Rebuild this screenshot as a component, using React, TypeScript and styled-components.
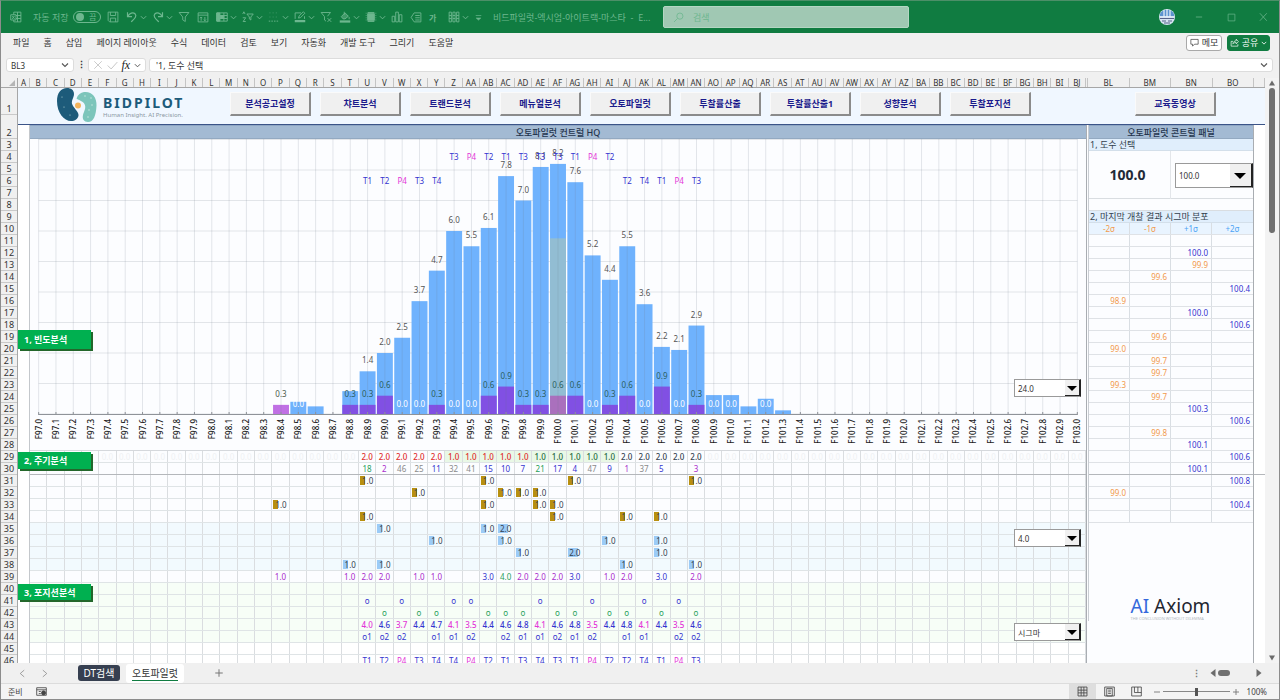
import React from "react";
import styled, { createGlobalStyle, css } from "styled-components";

const FONT = `"Noto Sans", "Noto Sans CJK KR", sans-serif`;

const Global = createGlobalStyle`
  *, *::before, *::after { box-sizing: border-box; }
  body { margin: 0; background: #f0f0f0; font-family: ${FONT}; color: #333; overflow: hidden; }
  button, input, select { font-family: inherit; margin: 0; }
  button { cursor: pointer; }
`;

const COLS = 61;
const BLUE = "#3434cf";
const PINK = "#e336d8";
const PURPLE = "#a92ccc";
const GREEN = "#27a05a";
const GRAY = "#8a8a8a";
const RED = "#e02b2b";
const DARK = "#33414f";

/* ---------- data ---------- */

type Cell = { text: string; color?: string; bg?: string; fill?: number; bold?: boolean };
type RowCells = Record<number, Cell>;

const blueBars: Record<number, number> = {
  15: 0.4, 16: 0.25, 18: 0.75, 19: 1.4, 20: 2.0, 21: 2.5, 22: 3.7, 23: 4.7, 24: 6.0, 25: 5.5,
  26: 6.1, 27: 7.8, 28: 7.0, 29: 8.1, 30: 8.2, 31: 7.6, 32: 5.2, 33: 4.4, 34: 5.5, 35: 3.6,
  36: 2.2, 37: 2.1, 38: 2.9, 39: 0.62, 40: 0.62, 41: 0.25, 42: 0.5, 43: 0.12,
};
const purpleBars: Record<number, number> = {
  14: 0.3, 18: 0.3, 19: 0.3, 20: 0.6, 23: 0.3, 26: 0.6, 27: 0.9, 28: 0.3, 29: 0.3, 30: 0.6,
  31: 0.6, 33: 0.3, 34: 0.6, 36: 0.9, 38: 0.3,
};
const zeroLabels = [15, 21, 22, 24, 25, 32, 35, 37, 39, 40, 42];
const upperMarks: Record<number, string> = {
  24: "T3", 25: "P4", 26: "T2", 27: "T1", 28: "T3", 29: "T3", 30: "T3", 31: "T1", 32: "P4", 33: "T2",
};
const lowerMarks: Record<number, string> = {
  19: "T1", 20: "T2", 21: "P4", 22: "T3", 23: "T4", 34: "T2", 35: "T4", 36: "T1", 37: "P4", 38: "T3",
};

const run = (start: number, texts: string, color: (t: string) => string, bold = false): RowCells =>
  Object.fromEntries(
    texts.split(" ").flatMap((t, i) => (t === "-" ? [] : [[start + i, { text: t, color: color(t), bold }]]))
  );
const marks = (cols: number[], text: string, color: string, bg?: string, fill?: number): RowCells =>
  Object.fromEntries(cols.map((c) => [c, { text, color, bg, fill }]));

const weights: RowCells = Object.fromEntries(
  Array.from({ length: COLS }, (_, i): [number, Cell] => {
    if (i < 4) return [i, { text: "" }];
    if (i < 19 || i > 38) return [i, { text: "0.0", color: "#eff1f3" }];
    if (i < 24) return [i, { text: "2.0", color: RED, bold: true }];
    if (i < 29) return [i, { text: "1.0", color: RED, bg: "#e9f8e6", bold: true }];
    if (i < 34) return [i, { text: "1.0", color: "#1f6b3f", bg: "#e9f8e6", bold: true }];
    return [i, { text: "2.0", color: DARK, bold: true }];
  })
);
const cycleColor = (t: string) => {
  const n = Number(t);
  if (n <= 3) return PURPLE;
  if (n <= 17) return BLUE;
  return n <= 21 ? GREEN : GRAY;
};
const countColor = (t: string) => (t === "3.0" ? BLUE : t === "4.0" ? GREEN : PURPLE);
const posColor = (t: string) => (Number(t) < 4.2 ? PINK : BLUE);
const markColor = (t: string) => (t === "P4" ? PINK : BLUE);
const GOLD = "#b8900f";
const SKY = "#9bcbf7";

const dataRows: { id: number; tone?: "sky" | "mint" | "white"; strong?: boolean; cells: RowCells }[] = [
  { id: 29, cells: weights },
  { id: 30, strong: true, cells: run(19, "18 2 46 25 11 32 41 15 10 7 21 17 4 47 9 1 37 5 - 3", cycleColor) },
  { id: 31, cells: marks([19, 26, 31, 38], "1.0", DARK, GOLD, 1) },
  { id: 32, cells: marks([22, 27, 28, 29], "1.0", DARK, GOLD, 1) },
  { id: 33, cells: marks([14, 26, 29, 30], "1.0", DARK, GOLD, 1) },
  { id: 34, cells: marks([19, 30, 34, 36], "1.0", DARK, GOLD, 1) },
  { id: 35, tone: "sky", cells: { ...marks([20, 26], "1.0", DARK, SKY, 1), ...marks([27], "2.0", DARK, SKY, 2) } },
  { id: 36, tone: "sky", cells: marks([23, 27, 33, 36], "1.0", DARK, SKY, 1) },
  { id: 37, tone: "sky", cells: { ...marks([28, 36], "1.0", DARK, SKY, 1), ...marks([31], "2.0", DARK, SKY, 2) } },
  { id: 38, tone: "sky", cells: marks([18, 20, 34, 38], "1.0", DARK, SKY, 1) },
  { id: 39, cells: run(14, "1.0 - - - 1.0 2.0 2.0 - 1.0 1.0 - - 3.0 4.0 2.0 2.0 2.0 3.0 - 1.0 2.0 - 3.0 - 2.0", countColor) },
  { id: 40, tone: "mint", cells: {} },
  { id: 41, tone: "mint", cells: marks([19, 21, 24, 25, 29, 32, 35, 37], "o", BLUE) },
  { id: 42, tone: "mint", cells: marks([20, 22, 23, 26, 27, 28, 30, 31, 33, 34, 36, 38], "o", GREEN) },
  {
    id: 43, tone: "mint",
    cells: run(19, "4.0 4.6 3.7 4.4 4.7 4.1 3.5 4.4 4.6 4.8 4.1 4.6 4.8 3.5 4.4 4.8 4.1 4.4 3.5 4.6", posColor, true),
  },
  { id: 44, tone: "mint", cells: run(19, "o1 o2 o2 - o1 o1 o2 - o2 o1 o1 o2 o1 o2 - o1 o1 - o2 o2", () => BLUE) },
  { id: 45, tone: "white", cells: {} },
  { id: 46, tone: "white", cells: run(19, "T1 T2 P4 T3 T4 T4 P4 T2 T1 T3 T4 T3 T1 P4 T2 T2 T4 T1 P4 T3", markColor) },
];

const sigma: [number, string][] = [
  [-1, ""], [2, "100.0"], [2, "99.9"], [1, "99.6"], [3, "100.4"], [0, "98.9"], [2, "100.0"], [3, "100.6"],
  [1, "99.6"], [0, "99.0"], [1, "99.7"], [1, "99.7"], [0, "99.3"], [1, "99.7"], [2, "100.3"], [3, "100.6"],
  [1, "99.8"], [2, "100.1"], [3, "100.6"], [2, "100.1"], [3, "100.8"], [0, "99.0"], [3, "100.4"], [-1, ""],
];

const letters = "ABCDEFGHIJKLMNOPQRSTUVWXYZ";
const columnName = (n: number): string =>
  n < 26 ? letters[n] : letters[Math.floor(n / 26) - 1] + letters[n % 26];

/* ---------- icons ---------- */

const Svg = styled.svg<{ $s: number }>`
  width: ${(p) => p.$s}px;
  height: ${(p) => p.$s}px;
  flex: none;
  fill: none;
  stroke: currentColor;
  stroke-width: 1.2;
  display: block;
`;
const Icon = ({ size = 13, children }: { size?: number; children: React.ReactNode }) => (
  <Svg $s={size} viewBox="0 0 16 16" aria-hidden="true">{children}</Svg>
);
const Chevron = ({ size = 7 }: { size?: number }) => (
  <Icon size={size}><path d="M2 5l6 6 6-6" strokeWidth="2.2" /></Icon>
);

const glyphs: Record<string, React.ReactNode> = {
  save: <path d="M1.5 1.5h13v13h-11l-2-2zM4.500 1.500v4.500h7v-4.500M4.500 14.500v-5h7v5" />,
  undo: <path d="M2 1.500v6h6M2.300 7.200C5 3 9 1 12 3.700c3 3-.2 6-5 10.800" strokeWidth="1.600" />,
  redo: <path d="M14 1.500v6H8M13.700 7.200C11 3 7 1 4 3.700c-3 3 .2 6 5 10.800" strokeWidth="1.600" />,
  filter: <path d="M1.500 2h13L9.700 8v6l-3.400-2.200V8z" />,
  sort: <><path d="M1.500 2.500h13v12h-13zM1.500 5.500h13" /><path d="M5.500 13V8M4 9.500L5.500 8 7 9.500M10.500 8v5M9 11.500l1.500 1.500 1.500-1.500" /></>,
  grid: <><path d="M1 2.500h14v11H1zM1 6h14M1 10h14M5 2.500v11M10.500 2.500v11" /><path d="M5.500 6h5v4h-5zM1 2.500h4v11H1z" fill="currentColor" /></>,
  az: <><path d="M6.500 4h8.500l-3.200 4v4l-2-1.500V8z" /><path d="M1 9h4l-3.500 5H5M1 4l1.500-3L4 4" /></>,
  border: <><path d="M2 2.500h12M2 8h12" strokeDasharray="1.200 3" opacity=".6" /><path d="M1 13.500h14" strokeDasharray="2 1.500" /></>,
  pen: <><path d="M1.500 10.500v-8h8M14 7v3.500M6 9.500l.8-2.800L12.500 1l2 2L8.800 8.700z" /><path d="M1 13.500h14" strokeWidth="3" /></>,
  unfilter: <><path d="M8 13.500L6 12V7.500L1.500 2h12.500L10 7" /><path d="M10 9.500l5 5M15 9.500l-5 5" /></>,
  bucket: <><path d="M3 7.500L8 2.500l4.500 4.500L8 10.500H5.500zM13.500 8v3M7 1v4" fill="currentColor" fillOpacity=".5" /><path d="M1 14h14" strokeWidth="3" /></>,
  fill: <><path d="M3.500 3.500h9v9h-9z" fill="currentColor" /><path d="M1 3h1M1 6h1M1 9h1M1 12h1M14 3h1M14 6h1M14 9h1M14 12h1M3.500 2h9M3.500 14h9" /></>,
  chart: <path d="M1.500 7h3.500v7.500H1.500zM6.300 1.500h3.500v13H6.300zM11 5h3.500v9.500H11z" />,
  tag: <><path d="M5.500 2.500h9v12h-9L1.500 8.500z" /><path d="M7 6h6M7 9h6M7 12h6" /></>,
  columns: <path d="M1.500 1.500h3v13h-3zM6.500 1.500h3v13h-3zM11.500 1.500h3v13h-3zM1.500 6h3M6.500 6h3M11.500 6h3M1.500 10h3M6.500 10h3M11.500 10h3" />,
  more: <path d="M3 4.500h10M4 9l4 3.500L12 9z" fill="currentColor" />,
};

/* ---------- window chrome ---------- */

const Window = styled.div`
  height: 100vh;
  display: flex;
  flex-direction: column;
  border: 1px solid #8c8c8c;
  border-top-color: #4c8f68;
  background: #f0f0f0;
  overflow: hidden;
`;
const TitleBar = styled.header`
  flex: none;
  height: 32px;
  display: flex;
  align-items: center;
  padding-left: 9px;
  background: #107c41;
  color: #6db78f;
  font-size: 9px;
`;
const AutoSave = styled.label`
  width: 74px;
  margin-left: 11px;
  display: flex;
  align-items: center;
  gap: 5px;
  white-space: nowrap;
  flex: none;
`;
const Toggle = styled.button`
  width: 28px;
  height: 12px;
  flex: none;
  padding: 0 4px 0 2px;
  display: flex;
  align-items: center;
  justify-content: space-between;
  border: 1px solid #6db78f;
  border-radius: 6px;
  background: transparent;
  color: inherit;
  font-size: 8px;
  line-height: 8px;
  &::before {
    content: "";
    width: 8px;
    height: 8px;
    border-radius: 50%;
    background: #6db78f;
  }
`;
const QuickTools = styled.div`
  display: flex;
  flex: none;
`;
const QuickButton = styled.button<{ $menu?: boolean }>`
  width: ${(p) => (p.$menu ? 26 : 19)}px;
  height: 20px;
  padding: 0;
  display: flex;
  align-items: center;
  gap: 2px;
  border: 0;
  background: transparent;
  color: inherit;
  font-size: 8px;
  font-weight: 700;
`;
const FileName = styled.span`
  width: 170px;
  flex: none;
  white-space: nowrap;
`;
const SearchBox = styled.label`
  width: 246px;
  height: 22px;
  padding: 0 9px;
  display: flex;
  align-items: center;
  gap: 9px;
  border: 1px solid #b4d6c3;
  border-radius: 2px;
  background: #a0c8b3;
`;
const SearchInput = styled.input`
  width: 100%;
  padding: 0;
  border: 0;
  outline: 0;
  background: transparent;
  font-size: 9px;
  &::placeholder { color: #6db78f; opacity: 1; }
`;
const WindowControls = styled.div`
  margin-left: auto;
  padding-right: 8px;
  display: flex;
  align-items: center;
  gap: 16px;
`;
const ControlButton = styled.button`
  width: 16px;
  height: 16px;
  padding: 0;
  display: grid;
  place-items: center;
  border: 0;
  background: transparent;
  color: #6db78f;
`;

const Ribbon = styled.nav`
  flex: none;
  height: 25px;
  padding: 0 9px 6px 12px;
  display: flex;
  align-items: center;
  gap: 14px;
`;
const RibbonTab = styled.button`
  padding: 0;
  border: 0;
  background: transparent;
  color: #333;
  font-size: 9px;
  line-height: 16px;
  white-space: nowrap;
`;
const RibbonActions = styled.div`
  margin-left: auto;
  display: flex;
  gap: 5px;
`;
const ActionButton = styled.button<{ $primary?: boolean }>`
  width: ${(p) => (p.$primary ? 43 : 36)}px;
  height: 16px;
  padding: 0;
  display: flex;
  align-items: center;
  justify-content: center;
  gap: 3px;
  border: 1px solid ${(p) => (p.$primary ? "#107c41" : "#a9a9a9")};
  border-radius: 3px;
  background: ${(p) => (p.$primary ? "#107c41" : "#fff")};
  color: ${(p) => (p.$primary ? "#fff" : "#333")};
  font-size: 9px;
  line-height: 12px;
  white-space: nowrap;
`;

const FormulaBar = styled.div`
  flex: none;
  height: 20px;
  padding: 0 6px 6px 5px;
  display: flex;
  gap: 3px;
  font-size: 8px;
`;
const FormulaBox = styled.div<{ $w?: number }>`
  ${(p) => (p.$w ? css`width: ${p.$w}px; flex: none;` : css`flex: 1;`)}
  height: 14px;
  padding: 0 4px;
  display: flex;
  align-items: center;
  justify-content: space-between;
  border: 1px solid #dcdcdc;
  border-radius: 3px;
  background: #fff;
  color: #555;
`;
const FormulaInput = styled.input`
  flex: 1;
  min-width: 0;
  height: 12px;
  padding: 0;
  border: 0;
  outline: 0;
  background: transparent;
  color: #333;
  font-size: 8px;
`;
const FormulaText = styled(FormulaInput)`
  padding-left: 2px;
  font-size: 9px;
`;
const Dots = styled.span`
  width: 8px;
  text-align: center;
  font-weight: 700;
  font-size: 9px;
  line-height: 13px;
`;
const Fx = styled.i`
  font-family: "Liberation Serif", serif;
  font-size: 12px;
  line-height: 12px;
  color: #222;
`;

/* ---------- sheet ---------- */

const Workbook = styled.main`
  flex: 1;
  min-height: 0;
  display: flex;
`;
const Sheet = styled.div`
  flex: 1;
  min-width: 0;
  display: flex;
  flex-direction: column;
  overflow: hidden;
  background: #fff;
`;
const ColumnHeads = styled.div`
  flex: none;
  height: 10px;
  display: flex;
  background: #f0f0f0;
  border-bottom: 1px solid #a6a6a6;
  color: #333;
  font-size: 8px;
  line-height: 9px;
  text-align: center;
`;
const Head = styled.span<{ $w?: number }>`
  ${(p) => (p.$w !== undefined ? css`width: ${p.$w}px;` : css`min-width: 0;`)}
  border-right: 1px solid #c4c4c4;
  white-space: nowrap;
`;
const Corner = styled.span`
  width: 17px;
  display: flex;
  justify-content: flex-end;
  border-right: 1px solid #a6a6a6;
  &::after {
    content: "";
    width: 6px;
    height: 6px;
    margin: 2px 2px 0 0;
    background: #b5b5b5;
    clip-path: polygon(100% 0, 100% 100%, 0 100%);
  }
`;
const HeadGroup = styled.div<{ $n: number; $w?: number }>`
  ${(p) => (p.$w ? css`width: ${p.$w}px;` : css`flex: 1;`)}
  min-width: 0;
  display: grid;
  grid-template-columns: repeat(${(p) => p.$n}, minmax(0, 1fr));
`;
const SheetBody = styled.div`
  flex: 1;
  min-height: 0;
  display: flex;
  overflow: hidden;
`;
const RowHeads = styled.div`
  width: 17px;
  flex: none;
  background: #f0f0f0;
  border-right: 1px solid #a6a6a6;
  color: #333;
  font-size: 9px;
  text-align: center;
`;
const RowHead = styled.div<{ $h?: number }>`
  height: ${(p) => p.$h ?? 12}px;
  display: flex;
  align-items: flex-end;
  justify-content: center;
  line-height: 10px;
  border-bottom: 1px solid #c9c9c9;
`;
const Content = styled.div`
  flex: 1;
  min-width: 0;
`;
const Band = styled.div`
  height: 37px;
  padding: 0 49px 0 39px;
  display: flex;
  align-items: flex-start;
  background: #f0f7ff;
  border-bottom: 1px solid #3b5488;
`;
const Brand = styled.div`
  width: 173px;
  display: flex;
  flex: none;
`;
const BrandMark = styled.svg`
  width: 40px;
  height: 36px;
`;
const BrandText = styled.div`
  margin: 7px 0 0 6px;
  white-space: nowrap;
  font-size: 6px;
  line-height: 8px;
  color: #8b98a3;
`;
const BrandName = styled.strong`
  display: block;
  color: #1d5b7a;
  font-size: 14px;
  line-height: 16px;
  letter-spacing: 2px;
`;
const Menu = styled.nav`
  flex: 1;
  display: flex;
  gap: 9px;
  padding-top: 4px;
`;
const MenuButton = styled.button<{ $last?: boolean }>`
  width: 81px;
  height: 24px;
  padding: 0;
  border: solid;
  border-width: 1px 2px 2px 1px;
  border-color: #fafafa #8b8b8b #8b8b8b #fafafa;
  background: #f0f0f0;
  color: #1b1b8c;
  font-size: 9px;
  font-weight: 700;
  white-space: nowrap;
  ${(p) => p.$last && css`margin-left: auto;`}
`;
const Panes = styled.div`
  display: flex;
`;
const ColumnA = styled.div`
  width: 12px;
  flex: none;
  border-right: 1px solid #c4c8cc;
`;
const Analysis = styled.section`
  position: relative;
  flex: 1;
  min-width: 0;
`;
const PaneTitle = styled.h2`
  margin: 0;
  height: 14px;
  border-top: 1px solid #8ea6c4;
  border-bottom: 1px solid #93a9c1;
  background: #a3bad3;
  color: #24344d;
  font-size: 9px;
  line-height: 14px;
  font-weight: 500;
  text-align: center;
`;
const Plot = styled.svg`
  display: block;
  width: 100%;
  height: 276px;
  background: #fcfdff;
  font-family: ${FONT};
  font-size: 8px;
`;
const Axis = styled.div`
  height: 36px;
  padding-top: 4px;
  display: grid;
  grid-template-columns: repeat(${COLS}, minmax(0, 1fr));
  justify-items: center;
  align-items: start;
  background: #fcfdff;
  border-bottom: 1px solid #d5d8dc;
`;
const AxisLabel = styled.span`
  writing-mode: vertical-rl;
  transform: rotate(180deg);
  color: #222;
  font-size: 8px;
  line-height: 12px;
  font-weight: 500;
`;
const DataTable = styled.table`
  display: block;
  font-size: 8px;
`;
const DataBody = styled.tbody`
  display: block;
`;
const tones = { sky: "#f2fafe", mint: "#f7fef7", white: "#ffffff" };
const DataRow = styled.tr<{ $tone?: "sky" | "mint" | "white"; $strong?: boolean }>`
  height: 12px;
  display: grid;
  grid-template-columns: repeat(${COLS}, minmax(0, 1fr));
  background: ${(p) => (p.$tone ? tones[p.$tone] : "#fcfdff")};
  border-bottom: 1px solid ${(p) => (p.$strong ? "#b4b7bb" : "#dfe4e6")};
`;
const DataCell = styled.td<{ $color?: string; $bg?: string; $fill?: number; $bold?: boolean }>`
  min-width: 0;
  padding: 0;
  border-right: 1px solid #dadde0;
  color: ${(p) => p.$color};
  font-weight: ${(p) => (p.$bold ? 500 : 400)};
  line-height: 11px;
  text-align: ${(p) => (p.$fill === 1 ? "right" : "center")};
  white-space: nowrap;
  ${(p) => p.$bg && !p.$fill && css`background: ${p.$bg};`}
  ${(p) => p.$fill && css`
    background: linear-gradient(${p.$bg}, ${p.$bg}) 1px 1px / ${p.$fill * 5}px 9px no-repeat;
    padding-right: ${p.$fill === 1 ? 2 : 0}px;
  `}
`;
const Section = styled.button<{ $top: number; $h: number }>`
  position: absolute;
  left: -12px;
  top: ${(p) => p.$top}px;
  width: 73px;
  height: ${(p) => p.$h}px;
  padding: 0 0 0 6px;
  border: 0;
  background: #00b050;
  box-shadow: 2px 2px 0 #23672b;
  color: #fff;
  font-size: 9px;
  font-weight: 700;
  text-align: left;
  white-space: nowrap;
`;
const Combo = styled.div<{ $w: number; $h: number; $top?: number }>`
  position: relative;
  width: ${(p) => p.$w}px;
  height: ${(p) => p.$h}px;
  ${(p) => p.$top !== undefined && css`position: absolute; right: 5px; top: ${p.$top}px;`}
  &::after {
    content: "";
    position: absolute;
    right: ${(p) => (p.$w > 70 ? 7 : 4)}px;
    top: ${(p) => (p.$w > 70 ? 10 : 7)}px;
    border: solid transparent;
    border-width: ${(p) => (p.$w > 70 ? "6px 6px 0" : "5px 5px 0")};
    border-top-color: #000;
    pointer-events: none;
  }
`;
const ComboSelect = styled.select<{ $arrow: number }>`
  display: block;
  width: 100%;
  height: 100%;
  padding: 0 0 0 3px;
  appearance: none;
  border: 1px solid #9a9a9a;
  border-right: 1px solid #222;
  border-radius: 0;
  background:
    linear-gradient(#222, #222) right bottom / ${(p) => p.$arrow}px 1px no-repeat,
    linear-gradient(#222, #222) right / 1px 100% no-repeat,
    linear-gradient(#f0f0f0, #f0f0f0) right / ${(p) => p.$arrow}px 100% no-repeat,
    #fff;
  color: #333;
  font-size: 8px;
`;

const Panel = styled.aside`
  width: 168px;
  flex: none;
  border-left: 1px solid #a9adb2;
  border-right: 1px solid #a9adb2;
  background: #fcfdff;
  font-size: 8px;
`;
const PanelInner = styled.div`
  margin-left: 1px;
  border-left: 1px solid #c9cdd2;
`;
const PanelHeading = styled.h3`
  margin: 0;
  height: 12px;
  padding-left: 1px;
  background: #e0eefc;
  border-bottom: 1px solid #d3dfea;
  color: #333f4d;
  font-size: 9px;
  line-height: 11px;
  font-weight: 400;
`;
const Picker = styled.div`
  height: 48px;
  display: grid;
  grid-template-columns: 1fr 1fr;
  border-bottom: 1px solid #d9dde1;
`;
const PickerValue = styled.output`
  padding-right: 4px;
  border-right: 1px solid #e3e6ea;
  color: #222b38;
  font-size: 14px;
  line-height: 48px;
  font-weight: 700;
  text-align: center;
`;
const PickerCombo = styled.div`
  display: flex;
  align-items: center;
  justify-content: flex-end;
`;
const Spacer = styled.div`
  height: 12px;
  border-bottom: 1px solid #d9dde1;
`;
const SigmaTable = styled.table`
  display: block;
  thead, tbody { display: block; }
`;
const SigmaRow = styled.tr<{ $head?: boolean; $strong?: boolean }>`
  height: 12px;
  display: grid;
  grid-template-columns: repeat(4, minmax(0, 1fr));
  border-bottom: 1px solid ${(p) => (p.$strong ? "#b4b7bb" : "#dfe2e6")};
  background: ${(p) => (p.$head ? "#e9f4ff" : "transparent")};
`;
const SigmaHead = styled.th<{ $up: boolean }>`
  padding: 0;
  border-right: 1px solid #d9dee3;
  color: ${(p) => (p.$up ? "#4ba3f5" : "#f29a4c")};
  font-weight: 400;
  line-height: 11px;
  &:last-child { border-right: 0; }
`;
const SigmaCell = styled.td<{ $up: boolean }>`
  padding: 0 3px 0 0;
  border-right: 1px solid #d9dee3;
  color: ${(p) => (p.$up ? BLUE : "#f29a4c")};
  line-height: 11px;
  text-align: right;
  &:last-child { border-right: 0; }
`;
const Axiom = styled.div`
  width: 81px;
  margin: 72px auto 0;
  color: #1f2630;
  font-size: 19px;
  line-height: 22px;
  white-space: nowrap;
`;
const AxiomAccent = styled.span`
  color: #3468dc;
`;
const AxiomTag = styled.small`
  display: block;
  color: #b3b8c0;
  font-size: 4px;
  line-height: 4px;
`;
const Tail = styled.div`
  width: 11px;
  flex: none;
  &::before {
    content: "";
    display: block;
    height: 350px;
    border-bottom: 1px solid #b4b7bb;
  }
`;

const VScroll = styled.div`
  width: 14px;
  flex: none;
  display: flex;
  flex-direction: column;
  align-items: center;
  background: #f3f3f3;
`;
const ScrollArrow = styled.button<{ $dir: "up" | "down" | "left" | "right" }>`
  width: 10px;
  height: 10px;
  padding: 0;
  border: 0;
  background: #6b6b6b;
  clip-path: ${(p) =>
    ({
      up: "polygon(50% 25%, 80% 75%, 20% 75%)",
      down: "polygon(20% 25%, 80% 25%, 50% 75%)",
      left: "polygon(75% 10%, 75% 90%, 25% 50%)",
      right: "polygon(25% 10%, 75% 50%, 25% 90%)",
    })[p.$dir]};
`;
const VThumb = styled.div`
  width: 6px;
  height: 145px;
  margin-bottom: auto;
  border-radius: 3px;
  background: #707070;
`;

/* ---------- bottom bars ---------- */

const SheetTabs = styled.div`
  flex: none;
  height: 21px;
  padding: 0 15px;
  display: flex;
  align-items: center;
  border-bottom: 1px solid #dcdcdc;
  color: #777;
`;
const IconButton = styled.button<{ $w?: number }>`
  width: ${(p) => p.$w ?? 12}px;
  height: 12px;
  padding: 0;
  display: grid;
  place-items: center;
  border: 0;
  background: transparent;
  color: #777;
`;
const TabArrows = styled.div`
  width: 62px;
  display: flex;
  gap: 10px;
`;
const SheetTab = styled.button<{ $active?: boolean }>`
  height: ${(p) => (p.$active ? 19 : 16)}px;
  width: ${(p) => (p.$active ? 58 : 42)}px;
  margin-right: ${(p) => (p.$active ? 29 : 6)}px;
  padding: 0;
  border: 0;
  border-radius: 3px;
  background: ${(p) => (p.$active ? "#fff" : "#363f50")};
  color: ${(p) => (p.$active ? "#333" : "#fff")};
  font-size: 10px;
  line-height: 14px;
  white-space: nowrap;
`;
const TabName = styled.span`
  display: inline-block;
  border-bottom: 1px solid #107c41;
`;
const HScroll = styled.div`
  margin-left: auto;
  display: flex;
  align-items: center;
`;
const HThumb = styled.div`
  width: 12px;
  height: 6px;
  margin-right: 24px;
  border-radius: 3px;
  background: #707070;
`;
const StatusBar = styled.footer`
  flex: none;
  height: 15px;
  padding: 0 12px 0 7px;
  display: flex;
  align-items: center;
  gap: 13px;
  background: #f4f4f4;
  color: #444;
  font-size: 8px;
`;
const Views = styled.div`
  margin-left: auto;
  display: flex;
`;
const ViewButton = styled.button<{ $on?: boolean }>`
  width: 27px;
  height: 15px;
  padding: 0;
  display: grid;
  place-items: center;
  border: 0;
  background: ${(p) => (p.$on ? "#dedede" : "transparent")};
  color: #444;
`;
const Zoom = styled.div`
  display: flex;
  align-items: center;
  margin-left: -12px;
`;
const ZoomRange = styled.input`
  width: 67px;
  height: 10px;
  margin: 0;
  appearance: none;
  background: linear-gradient(#888, #888) center / 100% 1px no-repeat;
  &::-webkit-slider-thumb {
    appearance: none;
    width: 3px;
    height: 8px;
    background: #555;
  }
`;
const ZoomText = styled.span`
  margin-left: 5px;
`;

/* ---------- chart ---------- */

const UNIT = 30.5;
const BASE = 275;
const pct = (i: number, offset = 0) => `${((i + 0.5 + offset) / COLS) * 100}%`;
const barWidth = `${(0.92 / COLS) * 100}%`;

const Bar = ({ i, value, fill }: { i: number; value: number; fill: string }) => (
  <rect x={pct(i, -0.46)} y={BASE - value * UNIT} width={barWidth} height={value * UNIT} fill={fill} />
);
const Label = ({ i, y, fill, children }: { i: number; y: number; fill: string; children: string }) => (
  <text x={pct(i)} y={y} fill={fill} textAnchor="middle">{children}</text>
);
const entries = <T,>(o: Record<number, T>) => Object.entries(o).map(([k, v]) => [Number(k), v as T] as const);

const FrequencyChart = () => (
  <Plot role="img" aria-label="빈도분석">
    {Array.from({ length: 10 }, (_, k) => (
      <line key={k} x1={pct(0)} x2={pct(60)} y1={BASE - k * UNIT} y2={BASE - k * UNIT} stroke="#e2e5e9" />
    ))}
    {entries(blueBars).map(([i, v]) => <Bar key={i} i={i} value={v} fill="#6fb2fd" />)}
    <Bar i={30} value={5.76} fill="#92bdd3" />
    {entries(purpleBars).map(([i, v]) => (
      <Bar key={i} i={i} value={v} fill={i === 14 ? "#c070e4" : i === 30 ? "#aa70bd" : "#8150e3"} />
    ))}
    {Array.from({ length: COLS }, (_, i) => (
      <line key={i} x1={pct(i)} x2={pct(i)} y1={0} y2={BASE} stroke="#70788a" strokeOpacity="0.18" />
    ))}
    <line x1={pct(0)} x2={pct(60)} y1={275.5} y2={275.5} stroke="#8f9399" />
    {Array.from({ length: COLS }, (_, i) => (
      <line key={i} x1={pct(i)} x2={pct(i)} y1={273} y2={276} stroke="#8f9399" />
    ))}
    {entries(blueBars).filter(([, v]) => v >= 1).map(([i, v]) => (
      <Label key={i} i={i} y={BASE - v * UNIT - 8} fill="#555">{v.toFixed(1)}</Label>
    ))}
    {entries(purpleBars).map(([i, v]) => (
      <Label key={i} i={i} y={BASE - v * UNIT - 8} fill={i === 14 ? "#4b5b4b" : "#2b6060"}>{v.toFixed(1)}</Label>
    ))}
    {zeroLabels.map((i) => <Label key={i} i={i} y={BASE - 7} fill="#fff">0.0</Label>)}
    {entries(upperMarks).map(([i, t]) => <Label key={i} i={i} y={21} fill={markColor(t)}>{t}</Label>)}
    {entries(lowerMarks).map(([i, t]) => <Label key={i} i={i} y={45} fill={markColor(t)}>{t}</Label>)}
  </Plot>
);

const ComboBox = ({ label, value, w, h, top }: { label: string; value: string; w: number; h: number; top?: number }) => (
  <Combo $w={w} $h={h} $top={top}>
    <ComboSelect aria-label={label} $arrow={w > 70 ? 22 : 15} defaultValue={value}>
      <option>{value}</option>
    </ComboSelect>
  </Combo>
);

const quick: [string, string, boolean][] = [
  ["save", "저장", false], ["undo", "실행 취소", true], ["redo", "다시 실행", true], ["filter", "필터", false],
  ["sort", "정렬", false], ["grid", "틀 고정", true], ["az", "정렬 및 필터", true], ["border", "테두리", true],
  ["pen", "테두리 색", true], ["unfilter", "필터 지우기", false], ["bucket", "채우기 색", true], ["fill", "셀 서식", true],
  ["chart", "차트", false], ["tag", "이름", false], ["font", "글꼴", false], ["columns", "열", true], ["more", "더 보기", false],
];
const ribbonTabs = ["파일", "홈", "삽입", "페이지 레이아웃", "수식", "데이터", "검토", "보기", "자동화", "개발 도구", "그리기", "도움말"];
const menuItems = ["분석공고설정", "챠트분석", "트랜드분석", "메뉴얼분석", "오토파일럿", "투찰률산출", "투찰률산출1", "성향분석", "투찰포지션"];

export default function App() {
  return (
    <>
      <Global />
      <Window>
        <TitleBar>
          <Icon size={12}><path d="M5 1.500h9.500v13H5zM5 6h9.500M5 10h9.500M10 1.500v13" /><path d="M1 5h7v7H1z" fill="#107c41" /><path d="M3 6.500l3 4M6 6.500l-3 4" /></Icon>
          <AutoSave>
            자동 저장
            <Toggle type="button">끔</Toggle>
          </AutoSave>
          <QuickTools>
            {quick.map(([id, name, menu]) => (
              <QuickButton key={id} type="button" aria-label={name} $menu={menu}>
                {id === "font" ? "가" : <Icon size={id === "more" ? 9 : 12}>{glyphs[id]}</Icon>}
                {menu && <Chevron />}
              </QuickButton>
            ))}
          </QuickTools>
          <FileName>비드파일럿-엑시엄-아이트랙-마스타&nbsp; -&nbsp; E...</FileName>
          <SearchBox>
            <Icon size={11}><circle cx="10" cy="6" r="4.500" /><path d="M6.500 9.500L1.500 14.500" /></Icon>
            <SearchInput placeholder="검색" aria-label="검색" />
          </SearchBox>
          <WindowControls>
            <Icon size={16}>
              <circle cx="8" cy="8" r="8" fill="#d5e4f2" stroke="none" />
              <path d="M1 5a8 8 0 0 1 14 0v2H1z" fill="#5b93cf" stroke="none" />
              <path d="M5 1v7M8 0v8M11 1v7" stroke="#e9f2fa" />
              <path d="M1 9.500h14M3 12h4M9 12h4M5 14h6" stroke="#56628a" />
            </Icon>
            <ControlButton type="button" aria-label="최소화"><Icon size={10}><path d="M3 8h10" /></Icon></ControlButton>
            <ControlButton type="button" aria-label="최대화"><Icon size={9}><path d="M2 2h12v12H2z" /></Icon></ControlButton>
            <ControlButton type="button" aria-label="닫기"><Icon size={10}><path d="M3 2l11 12M14 2L3 14" /></Icon></ControlButton>
          </WindowControls>
        </TitleBar>

        <Ribbon>
          {ribbonTabs.map((t) => <RibbonTab key={t} type="button">{t}</RibbonTab>)}
          <RibbonActions>
            <ActionButton type="button">
              <Icon size={9}><path d="M1.500 2.500h13v8.500H8l-3.500 3.500V11h-3z" /></Icon>메모
            </ActionButton>
            <ActionButton type="button" $primary>
              <Icon size={9}><path d="M5.500 6H2v8.500h12V11M5 10.500C5.500 7 8 5 11 5V2l4 4.500-4 4V8c-3 0-4.500.800-6 2.500z" /></Icon>공유<Chevron size={6} />
            </ActionButton>
          </RibbonActions>
        </Ribbon>

        <FormulaBar>
          <FormulaBox $w={68}>
            <FormulaInput aria-label="이름 상자" defaultValue="BL3" />
            <Chevron size={8} />
          </FormulaBox>
          <Dots>⋮</Dots>
          <FormulaBox $w={58}>
            <Icon size={10}><path d="M2 2l12 12M14 2L2 14" stroke="#bbb" /></Icon>
            <Icon size={11}><path d="M1 8l5 5L15 3" stroke="#bbb" /></Icon>
            <Fx>fx</Fx>
            <Chevron size={7} />
          </FormulaBox>
          <FormulaBox>
            <FormulaText aria-label="수식 입력줄" defaultValue="'1, 도수 선택" />
            <Chevron size={8} />
          </FormulaBox>
        </FormulaBar>

        <Workbook>
          <Sheet>
            <ColumnHeads>
              <Corner />
              <Head $w={12}>A</Head>
              <HeadGroup $n={COLS}>
                {Array.from({ length: COLS }, (_, i) => <Head key={i}>{columnName(i + 1)}</Head>)}
              </HeadGroup>
              <Head $w={2} />
              <HeadGroup $n={4} $w={166}>
                {["BL", "BM", "BN", "BO"].map((c) => <Head key={c}>{c}</Head>)}
              </HeadGroup>
              <Head $w={11} />
            </ColumnHeads>
            <SheetBody>
              <RowHeads>
                <RowHead $h={27}>1</RowHead>
                <RowHead $h={24}>2</RowHead>
                {Array.from({ length: 44 }, (_, i) => <RowHead key={i}>{i + 3}</RowHead>)}
              </RowHeads>
              <Content>
                <Band>
                  <Brand>
                    <BrandMark viewBox="0 0 40 36" aria-hidden="true">
                      <path d="M10 0C4 0 0 5 0 13c0 12 7 20 14 20 4 0 7-2 7.500-5.500C22 24 17.500 21 15.500 17 13.500 13 17 10 17 6c0-4-3-6-7-6z" fill="#1d5b7a" />
                      <path d="M27 4c7.500-1 13 5 12.500 13.500C39 28 36.500 34 31 34c-4 0-6-3-5-7 1-4 3.500-7 1.500-11-1.500-3-5.500-3.500-8-5.500C21 6.500 23.500 4.500 27 4z" fill="#7cc5bb" />
                      <circle cx="21" cy="17.500" r="3" fill="#f3b45c" />
                      <g fill="#cfeae6"><circle cx="28" cy="8" r=".7" /><circle cx="34" cy="10" r=".7" /><circle cx="35" cy="17" r=".7" /><circle cx="32" cy="22" r=".7" /><circle cx="31" cy="29" r=".7" /><circle cx="5" cy="9" r=".5" /><circle cx="7" cy="19" r=".5" /><circle cx="13" cy="27" r=".5" /></g>
                    </BrandMark>
                    <BrandText><BrandName>BIDPILOT</BrandName>Human Insight. AI Precision.</BrandText>
                  </Brand>
                  <Menu>
                    {menuItems.map((m) => <MenuButton key={m} type="button">{m}</MenuButton>)}
                    <MenuButton type="button" $last>교육동영상</MenuButton>
                  </Menu>
                </Band>
                <Panes>
                  <ColumnA />
                  <Analysis>
                    <PaneTitle>오토파일럿 컨트럴 HQ</PaneTitle>
                    <FrequencyChart />
                    <Axis>
                      {Array.from({ length: COLS }, (_, i) => (
                        <AxisLabel key={i}>{`F${(97 + i / 10).toFixed(1)}`}</AxisLabel>
                      ))}
                    </Axis>
                    <DataTable aria-label="주기 및 포지션 분석">
                      <DataBody>
                        {dataRows.map((r) => (
                          <DataRow key={r.id} $tone={r.tone} $strong={r.strong}>
                            {Array.from({ length: COLS }, (_, i) => {
                              const c = r.cells[i];
                              return (
                                <DataCell key={i} $color={c?.color} $bg={c?.bg} $fill={c?.fill} $bold={c?.bold}>
                                  {c?.text}
                                </DataCell>
                              );
                            })}
                          </DataRow>
                        ))}
                      </DataBody>
                    </DataTable>
                    <Section type="button" $top={205} $h={19}>1, 빈도분석</Section>
                    <Section type="button" $top={327} $h={17}>2, 주기분석</Section>
                    <Section type="button" $top={459} $h={16}>3, 포지션분석</Section>
                    <ComboBox label="구간" value="24.0" w={67} h={18} top={254} />
                    <ComboBox label="주기" value="4.0" w={67} h={18} top={404} />
                    <ComboBox label="포지션" value="시그마" w={67} h={18} top={498} />
                  </Analysis>
                  <Panel>
                    <PanelInner>
                      <PaneTitle>오토파일럿 콘트럴 패널</PaneTitle>
                      <PanelHeading>1, 도수 선택</PanelHeading>
                      <Picker>
                        <PickerValue>100.0</PickerValue>
                        <PickerCombo><ComboBox label="도수 선택" value="100.0" w={78} h={25} /></PickerCombo>
                      </Picker>
                      <Spacer />
                      <PanelHeading>2, 마지막 개찰 결과 시그마 분포</PanelHeading>
                      <SigmaTable>
                        <thead>
                          <SigmaRow $head>
                            {["-2σ", "-1σ", "+1σ", "+2σ"].map((s) => <SigmaHead key={s} $up={s[0] === "+"}>{s}</SigmaHead>)}
                          </SigmaRow>
                        </thead>
                        <tbody>
                          {sigma.map(([col, v], k) => (
                            <SigmaRow key={k} $strong={k === 19}>
                              {[0, 1, 2, 3].map((c) => (
                                <SigmaCell key={c} $up={Number(v) >= 100}>{c === col ? v : ""}</SigmaCell>
                              ))}
                            </SigmaRow>
                          ))}
                        </tbody>
                      </SigmaTable>
                      <Axiom>
                        <AxiomAccent>AI</AxiomAccent> Axiom
                        <AxiomTag>THE CONCLUSION WITHOUT DILEMMA</AxiomTag>
                      </Axiom>
                    </PanelInner>
                  </Panel>
                  <Tail />
                </Panes>
              </Content>
            </SheetBody>
          </Sheet>
          <VScroll>
            <ScrollArrow type="button" $dir="up" aria-label="위로" />
            <VThumb />
            <ScrollArrow type="button" $dir="down" aria-label="아래로" />
          </VScroll>
        </Workbook>

        <SheetTabs>
          <TabArrows>
            <IconButton type="button" aria-label="이전 시트"><Icon size={9}><path d="M11 2L4 8l7 6" /></Icon></IconButton>
            <IconButton type="button" aria-label="다음 시트"><Icon size={9}><path d="M5 2l7 6-7 6" /></Icon></IconButton>
          </TabArrows>
          <SheetTab type="button">DT검색</SheetTab>
          <SheetTab type="button" $active><TabName>오토파일럿</TabName></SheetTab>
          <IconButton type="button" aria-label="새 시트"><Icon size={10}><path d="M8 2v12M2 8h12" strokeWidth="1.600" /></Icon></IconButton>
          <HScroll>
            <Dots>⋮</Dots>
            <IconButton $w={8} type="button" aria-label="시트 탭 크기" />
            <ScrollArrow type="button" $dir="left" aria-label="왼쪽" />
            <HThumb />
            <ScrollArrow type="button" $dir="right" aria-label="오른쪽" />
          </HScroll>
        </SheetTabs>

        <StatusBar>
          준비
          <Icon size={11}><path d="M1 2.500h14v11H1zM1 5.500h14M4 8h3M4 11h3" /><circle cx="11" cy="10" r="3" fill="#444" /></Icon>
          <Views>
            <ViewButton type="button" aria-label="기본" $on><Icon size={11}><path d="M1.500 1.500h13v13h-13zM1.500 6h13M1.500 10h13M6 1.500v13M10 1.500v13" /></Icon></ViewButton>
            <ViewButton type="button" aria-label="페이지 레이아웃"><Icon size={11}><path d="M1 1.500h14v13H1zM4 3.500h8v11H4zM6 6h4M6 8.500h4M6 11h4" /></Icon></ViewButton>
            <ViewButton type="button" aria-label="페이지 나누기 미리 보기"><Icon size={11}><path d="M1 1.500h14v13H1zM5 1.500v8h5v-8M10 9.500h5" /></Icon></ViewButton>
          </Views>
          <Zoom>
            <IconButton type="button" aria-label="축소"><Icon size={8}><path d="M2 8h12" strokeWidth="1.800" /></Icon></IconButton>
            <ZoomRange type="range" aria-label="확대/축소" min="0" max="200" defaultValue="100" />
            <IconButton type="button" aria-label="확대"><Icon size={8}><path d="M2 8h12M8 2v12" strokeWidth="1.800" /></Icon></IconButton>
            <ZoomText>100%</ZoomText>
          </Zoom>
        </StatusBar>
      </Window>
    </>
  );
}
